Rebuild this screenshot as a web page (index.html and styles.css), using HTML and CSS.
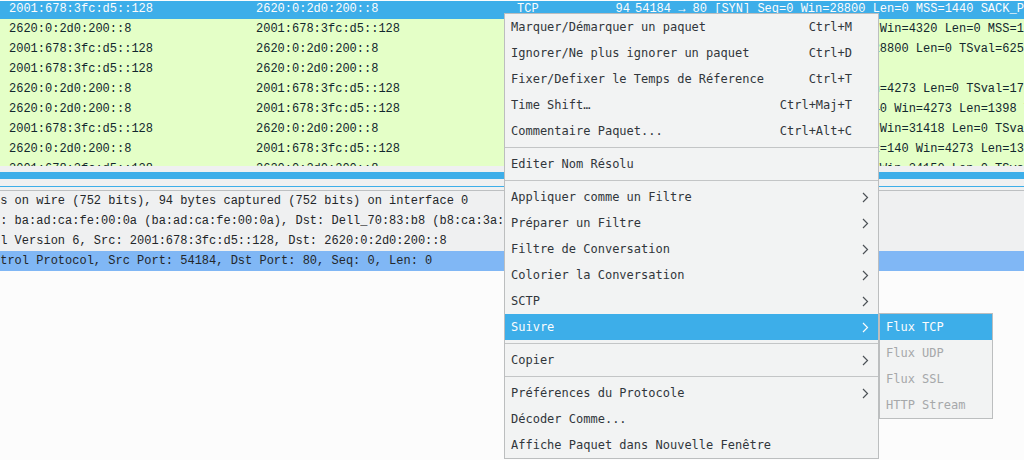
FILE: index.html
```html
<!DOCTYPE html>
<html lang="fr">
<head>
<meta charset="utf-8">
<title>Wireshark</title>
<link rel="stylesheet" href="styles.css">
</head>
<body>
<div class="app">
  <div class="plist">
    <div class="prows">
      <div class="prow sel"><span class="c-src">2001:678:3fc:d5::128</span><span class="c-dst">2620:0:2d0:200::8</span><span class="c-proto">TCP</span><span class="c-len">94</span><span class="c-info">54184 → 80 [SYN] Seq=0 Win=28800 Len=0 MSS=1440 SACK_PERM=1 TSval=625 TSecr=0 WS=128</span></div>
      <div class="prow"><span class="c-src">2620:0:2d0:200::8</span><span class="c-dst">2001:678:3fc:d5::128</span><span class="c-proto">TCP</span><span class="c-len">94</span><span class="c-info">80 → 54184 [SYN, ACK] Seq=0 Ack=1 Win=4320 Len=0 MSS=1440 SACK_PERM=1</span></div>
      <div class="prow"><span class="c-src">2001:678:3fc:d5::128</span><span class="c-dst">2620:0:2d0:200::8</span><span class="c-proto">TCP</span><span class="c-len">86</span><span class="c-info">54184 → 80 [ACK] Seq=1 Ack=1 Win=28800 Len=0 TSval=625 TSecr=17</span></div>
      <div class="prow"><span class="c-src">2001:678:3fc:d5::128</span><span class="c-dst">2620:0:2d0:200::8</span><span class="c-proto">HTTP</span><span class="c-len">201</span><span class="c-info">GET / HTTP/1.1 </span></div>
      <div class="prow"><span class="c-src">2620:0:2d0:200::8</span><span class="c-dst">2001:678:3fc:d5::128</span><span class="c-proto">TCP</span><span class="c-len">86</span><span class="c-info">80 → 54184 [ACK] Seq=1 Ack=116 Win=4273 Len=0 TSval=17 TSecr=625</span></div>
      <div class="prow"><span class="c-src">2620:0:2d0:200::8</span><span class="c-dst">2001:678:3fc:d5::128</span><span class="c-proto">TCP</span><span class="c-len">1484</span><span class="c-info">80 → 54184 [PSH, ACK] Seq=1 Ack=140 Win=4273 Len=1398 TSval=17</span></div>
      <div class="prow"><span class="c-src">2001:678:3fc:d5::128</span><span class="c-dst">2620:0:2d0:200::8</span><span class="c-proto">TCP</span><span class="c-len">86</span><span class="c-info">54184 → 80 [ACK] Seq=140 Ack=1399 Win=31418 Len=0 TSval=626</span></div>
      <div class="prow"><span class="c-src">2620:0:2d0:200::8</span><span class="c-dst">2001:678:3fc:d5::128</span><span class="c-proto">TCP</span><span class="c-len">1484</span><span class="c-info">80 → 54184 [PSH, ACK] Seq=1399 Ack=140 Win=4273 Len=1398</span></div>
      <div class="prow"><span class="c-src">2001:678:3fc:d5::128</span><span class="c-dst">2620:0:2d0:200::8</span><span class="c-proto">TCP</span><span class="c-len">86</span><span class="c-info">54184 → 80 [ACK] Seq=140 Ack=2797 Win=34150 Len=0 TSval=626</span></div>
    </div>
  </div>
  <div class="hscroll"><div class="handle"></div></div>
  <div class="splitter"></div>
  <div class="details">
    <div class="drow"><span class="dtext">Frame 1: 94 bytes on wire (752 bits), 94 bytes captured (752 bits) on interface 0</span></div>
    <div class="drow"><span class="dtext">Ethernet II, Src: ba:ad:ca:fe:00:0a (ba:ad:ca:fe:00:0a), Dst: Dell_70:83:b8 (b8:ca:3a:70:83:b8)</span></div>
    <div class="drow"><span class="dtext">Internet Protocol Version 6, Src: 2001:678:3fc:d5::128, Dst: 2620:0:2d0:200::8</span></div>
    <div class="drow dsel"><span class="dtext">Transmission Control Protocol, Src Port: 54184, Dst Port: 80, Seq: 0, Len: 0</span></div>
  </div>
</div>

<div class="menu">
  <div class="mi"><span class="ml">Marquer/Démarquer un paquet</span><span class="ms">Ctrl+M</span><span class="ma"></span></div>
  <div class="mi"><span class="ml">Ignorer/Ne plus ignorer un paquet</span><span class="ms">Ctrl+D</span><span class="ma"></span></div>
  <div class="mi"><span class="ml">Fixer/Defixer le Temps de Réference</span><span class="ms">Ctrl+T</span><span class="ma"></span></div>
  <div class="mi"><span class="ml">Time Shift…</span><span class="ms">Ctrl+Maj+T</span><span class="ma"></span></div>
  <div class="mi"><span class="ml">Commentaire Paquet...</span><span class="ms">Ctrl+Alt+C</span><span class="ma"></span></div>
  <div class="msep"></div>
  <div class="mi"><span class="ml">Editer Nom Résolu</span><span class="ma"></span></div>
  <div class="msep"></div>
  <div class="mi"><span class="ml">Appliquer comme un Filtre</span><span class="ma"><svg class="chev" width="7" height="11" viewBox="0 0 7 11"><polyline points="1,1 5.5,5.5 1,10"/></svg></span></div>
  <div class="mi"><span class="ml">Préparer un Filtre</span><span class="ma"><svg class="chev" width="7" height="11" viewBox="0 0 7 11"><polyline points="1,1 5.5,5.5 1,10"/></svg></span></div>
  <div class="mi"><span class="ml">Filtre de Conversation</span><span class="ma"><svg class="chev" width="7" height="11" viewBox="0 0 7 11"><polyline points="1,1 5.5,5.5 1,10"/></svg></span></div>
  <div class="mi"><span class="ml">Colorier la Conversation</span><span class="ma"><svg class="chev" width="7" height="11" viewBox="0 0 7 11"><polyline points="1,1 5.5,5.5 1,10"/></svg></span></div>
  <div class="mi"><span class="ml">SCTP</span><span class="ma"><svg class="chev" width="7" height="11" viewBox="0 0 7 11"><polyline points="1,1 5.5,5.5 1,10"/></svg></span></div>
  <div class="mi hl"><span class="ml">Suivre</span><span class="ma"><svg class="chev" width="7" height="11" viewBox="0 0 7 11"><polyline points="1,1 5.5,5.5 1,10"/></svg></span></div>
  <div class="msep"></div>
  <div class="mi"><span class="ml">Copier</span><span class="ma"><svg class="chev" width="7" height="11" viewBox="0 0 7 11"><polyline points="1,1 5.5,5.5 1,10"/></svg></span></div>
  <div class="msep"></div>
  <div class="mi"><span class="ml">Préférences du Protocole</span><span class="ma"><svg class="chev" width="7" height="11" viewBox="0 0 7 11"><polyline points="1,1 5.5,5.5 1,10"/></svg></span></div>
  <div class="mi"><span class="ml">Décoder Comme...</span><span class="ma"></span></div>
  <div class="mi"><span class="ml">Affiche Paquet dans Nouvelle Fenêtre</span><span class="ma"></span></div>
</div>

<div class="submenu">
  <div class="mi hl"><span class="ml">Flux TCP</span></div>
  <div class="mi dis"><span class="ml">Flux UDP</span></div>
  <div class="mi dis"><span class="ml">Flux SSL</span></div>
  <div class="mi dis"><span class="ml">HTTP Stream</span></div>
</div>
</body>
</html>
```

FILE: styles.css
```css
* { box-sizing: border-box; }

html, body {
  margin: 0;
  padding: 0;
}

body {
  width: 1024px;
  height: 460px;
  overflow: hidden;
  background: #fcfcfc;
  position: relative;
  font-family: "Liberation Mono", "DejaVu Sans Mono", monospace;
  font-size: 12px;
}

.app {
  display: flex;
  flex-direction: column;
  height: 460px;
}

/* packet list */
.plist {
  margin-top: 1px;
  height: 165px;
  overflow: hidden;
  flex: none;
}

.prows {
  margin-top: -2px;
}

.prow {
  display: flex;
  height: 20px;
  line-height: 20px;
  padding-left: 9px;
  white-space: nowrap;
  overflow: hidden;
  background: #e4ffc7;
  color: #12272e;
}

.prow.sel {
  background: #3daee9;
  color: #fcfcfc;
}

.prow span { flex: none; }
.c-src { width: 247px; }
.c-dst { width: 261px; }
.c-proto { width: 73px; }
.c-len { width: 45px; text-align: right; padding-right: 5px; }
.c-info { padding-left: 0; }

/* horizontal scrollbar */
.hscroll {
  flex: none;
  height: 20px;
  background: #eff0f1;
  padding-top: 6px;
}

.handle {
  height: 7px;
  background: #3daee9;
}

.splitter {
  flex: none;
  height: 5px;
  background: #eff0f1;
  border-top: 1px solid #3daee9;
  border-bottom: 1px solid #bdc0c2;
}

/* details */
.details {
  flex: 1;
  background: #fcfcfc;
  overflow: hidden;
}

.drow {
  height: 20px;
  line-height: 20px;
  white-space: nowrap;
  overflow: hidden;
  background: #eff0f1;
  color: #232629;
}

.drow.dsel {
  background: #80b7f5;
}

.dtext {
  display: inline-block;
  margin-left: -115px;
}

/* context menu */
.menu {
  position: absolute;
  left: 504px;
  top: 13px;
  width: 375px;
  background: #f2f3f3;
  border: 1px solid #bcbebf;
  font-family: "DejaVu Sans Mono", monospace;
  font-size: 12px;
  color: #31363b;
}

.mi {
  display: flex;
  align-items: center;
  height: 26px;
  padding-left: 6px;
  white-space: nowrap;
}

.ml { flex: 1; }

.ms {
  flex: none;
}

.ma {
  flex: none;
  width: 26px;
  height: 26px;
  display: flex;
  align-items: center;
  padding-left: 10px;
}

.chev polyline {
  fill: none;
  stroke: #4d5257;
  stroke-width: 1.2;
}

.mi.hl {
  background: #3daee9;
  color: #fcfcfc;
}

.mi.hl .chev polyline { stroke: #fcfcfc; }

.msep {
  height: 7px;
  display: flex;
  align-items: center;
}

.msep::before {
  content: "";
  display: block;
  width: 100%;
  height: 1px;
  background: #c3c5c6;
}

.submenu {
  position: absolute;
  left: 879px;
  top: 313px;
  width: 114px;
  background: #f2f3f3;
  border: 1px solid #bcbebf;
  font-family: "DejaVu Sans Mono", monospace;
  font-size: 12px;
  color: #31363b;
}

.submenu .mi { padding-left: 6px; }

.mi.dis { color: #a6a8aa; }
```
